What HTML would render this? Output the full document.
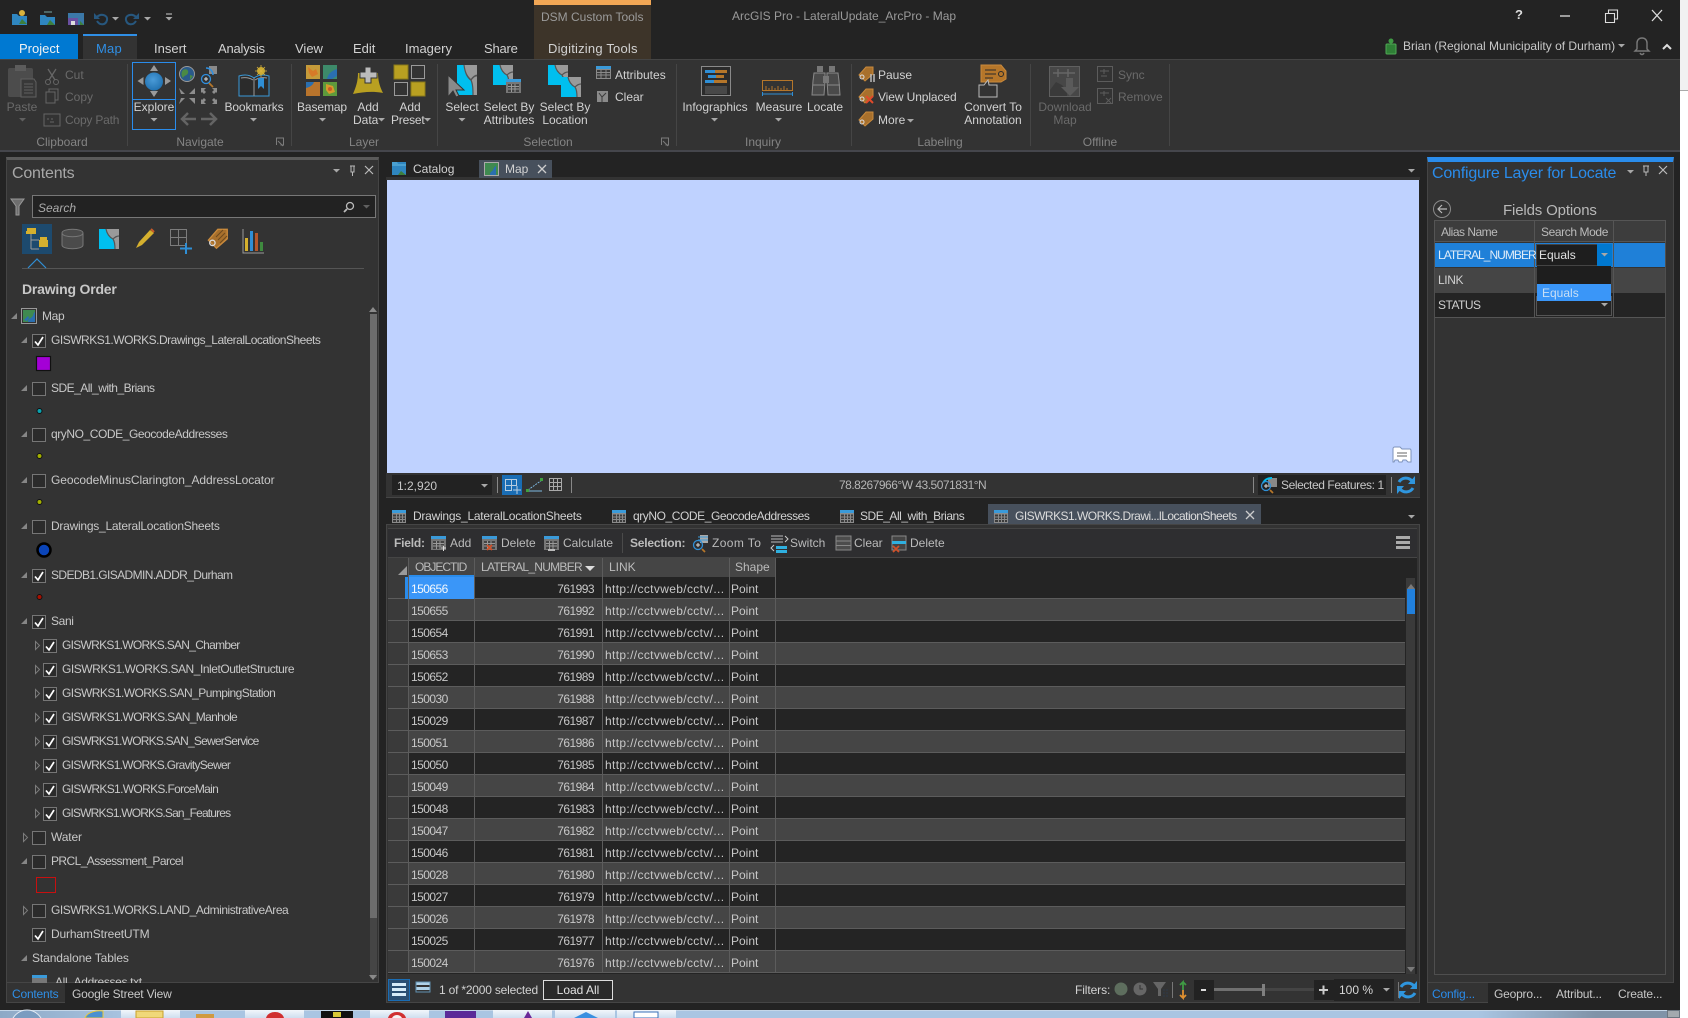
<!DOCTYPE html>
<html><head><meta charset="utf-8"><title>ArcGIS Pro</title>
<style>
html,body{margin:0;padding:0;background:#fff;}
body{position:relative;width:1688px;height:1018px;overflow:hidden;font-family:"Liberation Sans",sans-serif;font-size:12px;color:#d2d2d2;}
.b{position:absolute;}
.t{position:absolute;white-space:nowrap;line-height:16px;}
.c{transform:translateX(-50%);text-align:center;}
.g{color:#6a6a6a;}
.l{color:#848484;}
.n{letter-spacing:-.35px;color:#c8c8c8;}
.r{position:absolute;left:388px;width:1017px;height:22px;box-sizing:border-box;border-bottom:1px solid #5c5c5c;background:#242424;}
.r.e{background:#454545;}
.r i{position:absolute;top:4px;font-style:normal;line-height:16px;white-space:nowrap;color:#c8c8c8;}
.r .h{left:0;top:0;width:20px;height:21px;background:#3a3a3a;}
.r .a{left:23px;letter-spacing:-.55px;}.r .k{left:86px;width:120px;text-align:right;letter-spacing:-.55px;}.r .u{left:217px;letter-spacing:.35px;}.r .s{left:343px;}
svg{position:absolute;left:0;top:0;}
</style></head><body>
<div class="b" style="left:0;top:0;width:1680px;height:1018px;background:#232323"></div>
<div class="b" style="left:1680px;top:0;width:8px;height:90px;background:#f1f1f1;border-bottom:1px solid #aaa"></div>
<div class="b" style="left:534px;top:0;width:117px;height:5px;background:#f2a755"></div>
<div class="b" style="left:534px;top:5px;width:117px;height:54px;background:#3d3429"></div>
<div class="b" style="left:0;top:34px;width:78px;height:25px;background:#0079d2"></div>
<div class="b" style="left:83px;top:34px;width:54px;height:25px;background:#333;border-top:2px solid #2f8fe6;box-sizing:border-box"></div>
<div class="b" style="left:0;top:59px;width:1680px;height:93px;background:#333;border-top:1px solid #444;border-bottom:2px solid #45464c;box-sizing:border-box"></div>
<!-- panels -->
<div class="b" style="left:6px;top:157px;width:373px;height:826px;background:#333;border:1px solid #454545;box-sizing:border-box;border-top:3px solid #5a5a5a"></div>
<div class="b" style="left:6px;top:983px;width:59px;height:20px;background:#333;border-left:1px solid #454545;border-bottom:1px solid #454545;box-sizing:border-box"></div>
<div class="b" style="left:1427px;top:157px;width:247px;height:826px;background:#333;border:1px solid #454545;border-top:5px solid #2a8ceb;box-sizing:border-box"></div>
<div class="b" style="left:1427px;top:983px;width:61px;height:20px;background:#333;border-left:1px solid #454545;border-bottom:1px solid #454545;box-sizing:border-box"></div>
<div class="b" style="left:1434px;top:220px;width:232px;height:755px;border:1px solid #4f4f4f;box-sizing:border-box"></div>
<!-- config table -->
<div class="b" style="left:1434px;top:220px;width:232px;height:22px;background:#3d3d3d;border:1px solid #555;box-sizing:border-box"></div>
<div class="b" style="left:1435px;top:243px;width:230px;height:24px;background:#1f80d8"></div>
<div class="b" style="left:1435px;top:268px;width:230px;height:25px;background:#454545"></div>
<div class="b" style="left:1435px;top:293px;width:230px;height:25px;background:#242424;border-bottom:1px solid #555;box-sizing:border-box"></div>
<div class="b" style="left:1534px;top:220px;width:1px;height:98px;background:#555"></div>
<div class="b" style="left:1613px;top:220px;width:1px;height:98px;background:#555"></div>
<div class="b" style="left:1536px;top:244px;width:76px;height:22px;background:#1e1e1e;border:1px solid #444;box-sizing:border-box"></div>
<div class="b" style="left:1597px;top:244px;width:15px;height:22px;background:#0078d0"></div>
<div class="b" style="left:1536px;top:296px;width:76px;height:20px;border:1px solid #555;box-sizing:border-box"></div>
<div class="b" style="left:1537px;top:266px;width:74px;height:35px;background:#1e1e1e"></div>
<div class="b" style="left:1537px;top:284px;width:74px;height:17px;background:#3a96f8"></div>
<!-- map -->
<div class="b" style="left:386px;top:177px;width:1034px;height:3px;background:#333"></div>
<div class="b" style="left:479px;top:160px;width:73px;height:18px;background:#47505c"></div>
<div class="b" style="left:387px;top:180px;width:1032px;height:293px;background:#bfd2ff"></div>
<div class="b" style="left:386px;top:473px;width:1034px;height:25px;background:#333;border-bottom:1px solid #454545;box-sizing:border-box"></div>
<div class="b" style="left:392px;top:475px;width:100px;height:20px;background:#222"></div>
<div class="b" style="left:502px;top:475px;width:20px;height:20px;background:#1a6db4"></div>
<div class="b" style="left:1258px;top:475px;width:128px;height:20px;background:#222"></div>
<div class="b" style="left:497px;top:477px;width:1px;height:16px;background:#888"></div>
<div class="b" style="left:571px;top:477px;width:1px;height:16px;background:#888"></div>
<div class="b" style="left:1253px;top:477px;width:1px;height:16px;background:#888"></div>
<div class="b" style="left:1391px;top:477px;width:1px;height:16px;background:#888"></div>
<!-- table panel -->
<div class="b" style="left:988px;top:504px;width:273px;height:21px;background:#47505c"></div>
<div class="b" style="left:386px;top:524px;width:1034px;height:479px;background:#333;border:1px solid #454545;box-sizing:border-box"></div>
<div class="b" style="left:388px;top:528px;width:1029px;height:30px;background:#2e2e30;border-top:1px solid #444;border-bottom:1px solid #454545;box-sizing:border-box"></div>
<div class="b" style="left:622px;top:533px;width:1px;height:20px;background:#4a4a4a"></div>
<div class="b" style="left:388px;top:558px;width:1029px;height:416px;background:#242424"></div>
<div class="b" style="left:388px;top:558px;width:20px;height:19px;background:#3a3a3a"></div>
<div class="b" style="left:409px;top:558px;width:65px;height:19px;background:#454545;border-bottom:2px solid #2a8ceb;box-sizing:border-box"></div>
<div class="b" style="left:475px;top:558px;width:127px;height:19px;background:#454545"></div>
<div class="b" style="left:603px;top:558px;width:126px;height:19px;background:#454545"></div>
<div class="b" style="left:730px;top:558px;width:45px;height:19px;background:#454545"></div>
<div class="r"style="top:577px"><i class="h"></i><i class="k">761993</i><i class="u">http://cctvweb/cctv/...</i><i class="s">Point</i></div>
<div class="r e"style="top:599px"><i class="h"></i><i class="a">150655</i><i class="k">761992</i><i class="u">http://cctvweb/cctv/...</i><i class="s">Point</i></div>
<div class="r"style="top:621px"><i class="h"></i><i class="a">150654</i><i class="k">761991</i><i class="u">http://cctvweb/cctv/...</i><i class="s">Point</i></div>
<div class="r e"style="top:643px"><i class="h"></i><i class="a">150653</i><i class="k">761990</i><i class="u">http://cctvweb/cctv/...</i><i class="s">Point</i></div>
<div class="r"style="top:665px"><i class="h"></i><i class="a">150652</i><i class="k">761989</i><i class="u">http://cctvweb/cctv/...</i><i class="s">Point</i></div>
<div class="r e"style="top:687px"><i class="h"></i><i class="a">150030</i><i class="k">761988</i><i class="u">http://cctvweb/cctv/...</i><i class="s">Point</i></div>
<div class="r"style="top:709px"><i class="h"></i><i class="a">150029</i><i class="k">761987</i><i class="u">http://cctvweb/cctv/...</i><i class="s">Point</i></div>
<div class="r e"style="top:731px"><i class="h"></i><i class="a">150051</i><i class="k">761986</i><i class="u">http://cctvweb/cctv/...</i><i class="s">Point</i></div>
<div class="r"style="top:753px"><i class="h"></i><i class="a">150050</i><i class="k">761985</i><i class="u">http://cctvweb/cctv/...</i><i class="s">Point</i></div>
<div class="r e"style="top:775px"><i class="h"></i><i class="a">150049</i><i class="k">761984</i><i class="u">http://cctvweb/cctv/...</i><i class="s">Point</i></div>
<div class="r"style="top:797px"><i class="h"></i><i class="a">150048</i><i class="k">761983</i><i class="u">http://cctvweb/cctv/...</i><i class="s">Point</i></div>
<div class="r e"style="top:819px"><i class="h"></i><i class="a">150047</i><i class="k">761982</i><i class="u">http://cctvweb/cctv/...</i><i class="s">Point</i></div>
<div class="r"style="top:841px"><i class="h"></i><i class="a">150046</i><i class="k">761981</i><i class="u">http://cctvweb/cctv/...</i><i class="s">Point</i></div>
<div class="r e"style="top:863px"><i class="h"></i><i class="a">150028</i><i class="k">761980</i><i class="u">http://cctvweb/cctv/...</i><i class="s">Point</i></div>
<div class="r"style="top:885px"><i class="h"></i><i class="a">150027</i><i class="k">761979</i><i class="u">http://cctvweb/cctv/...</i><i class="s">Point</i></div>
<div class="r e"style="top:907px"><i class="h"></i><i class="a">150026</i><i class="k">761978</i><i class="u">http://cctvweb/cctv/...</i><i class="s">Point</i></div>
<div class="r"style="top:929px"><i class="h"></i><i class="a">150025</i><i class="k">761977</i><i class="u">http://cctvweb/cctv/...</i><i class="s">Point</i></div>
<div class="r e"style="top:951px"><i class="h"></i><i class="a">150024</i><i class="k">761976</i><i class="u">http://cctvweb/cctv/...</i><i class="s">Point</i></div>
<div class="b" style="left:409px;top:577px;width:65px;height:22px;background:#3a96f8"></div>
<div class="b" style="left:405px;top:577px;width:4px;height:22px;background:#2a8ceb"></div>
<span class="t" style="left:411px;top:581px;color:#f4f8fc;letter-spacing:-.55px">150656</span>
<div class="b" style="left:408px;top:558px;width:1px;height:415px;background:#5c5c5c"></div>
<div class="b" style="left:474px;top:558px;width:1px;height:415px;background:#5c5c5c"></div>
<div class="b" style="left:602px;top:558px;width:1px;height:415px;background:#5c5c5c"></div>
<div class="b" style="left:729px;top:558px;width:1px;height:415px;background:#5c5c5c"></div>
<div class="b" style="left:775px;top:558px;width:1px;height:415px;background:#5c5c5c"></div>
<div class="b" style="left:1406px;top:578px;width:9px;height:396px;background:#3a3a3a"></div>
<div class="b" style="left:1407px;top:589px;width:8px;height:25px;background:#2180dc"></div>
<!-- table footer -->
<div class="b" style="left:388px;top:979px;width:22px;height:22px;background:#2a4f72;border:1px solid #1a6db4;box-sizing:border-box"></div>
<div class="b" style="left:543px;top:980px;width:70px;height:20px;border:1px solid #ddd;box-sizing:border-box;background:#2a2a2a"></div>
<div class="b" style="left:1194px;top:980px;width:20px;height:20px;background:#222"></div>
<div class="b" style="left:1214px;top:988px;width:100px;height:3px;background:#444"></div>
<div class="b" style="left:1214px;top:988px;width:49px;height:3px;background:#707070"></div>
<div class="b" style="left:1262px;top:984px;width:3px;height:12px;background:#808080"></div>
<div class="b" style="left:1314px;top:980px;width:20px;height:20px;background:#222"></div>
<div class="b" style="left:1334px;top:979px;width:60px;height:22px;background:#222"></div>
<div class="b" style="left:1172px;top:982px;width:1px;height:16px;background:#777"></div>
<div class="b" style="left:1398px;top:982px;width:1px;height:16px;background:#777"></div>
<!-- contents scrollbar -->
<div class="b" style="left:370px;top:314px;width:7px;height:664px;background:#454545"></div>
<div class="b" style="left:370px;top:314px;width:7px;height:604px;background:#6c6c6c"></div>
<!-- contents inputs -->
<div class="b" style="left:32px;top:195px;width:344px;height:23px;background:#222;border:1px solid #777;box-sizing:border-box"></div>
<div class="b" style="left:22px;top:224px;width:30px;height:30px;background:#1d4a6e"></div>
<div class="b" style="left:22px;top:268px;width:342px;height:1px;background:#555"></div>
<!-- taskbar -->
<div class="b" style="left:0;top:1010px;width:1680px;height:8px;background:linear-gradient(90deg,#8ea9c6 0,#a9c5e2 8%,#a9c5e2 68%,#a9c5e2 88%,#8093a8 95%,#8093a8 100%);border-top:1px solid #c4d6e8;box-sizing:border-box"></div>
<div class="b" style="left:121px;top:1010px;width:59px;height:8px;background:linear-gradient(#f2f6fb,#cfdeef)"></div>
<div class="b" style="left:245px;top:1010px;width:59px;height:8px;background:linear-gradient(#f2f6fb,#cfdeef)"></div>
<div class="b" style="left:370px;top:1010px;width:59px;height:8px;background:linear-gradient(#f2f6fb,#cfdeef)"></div>
<div class="b" style="left:493px;top:1010px;width:59px;height:8px;background:linear-gradient(#f2f6fb,#cfdeef)"></div>
<div class="b" style="left:555px;top:1010px;width:60px;height:8px;background:linear-gradient(#f2f6fb,#cfdeef)"></div>
<div class="b" style="left:617px;top:1010px;width:59px;height:8px;background:linear-gradient(#f2f6fb,#cfdeef)"></div>
<div class="b" style="left:1667px;top:1010px;width:13px;height:8px;background:#a3a9ae;border:1px solid #6c7680;box-sizing:border-box"></div>

<svg width="1688" height="1018" viewBox="0 0 1688 1018" fill="none">
<defs>
<g id="cb"><rect x=".5" y=".5" width="13" height="13" fill="#2b2b2b" stroke="#767676"/></g>
<g id="ck"><rect x=".5" y=".5" width="13" height="13" fill="#2b2b2b" stroke="#767676"/><path d="M3 7.5 6 11 11 3" stroke="#fff" stroke-width="1.7"/></g>
<polygon id="te" points="0,6 6,6 6,0" fill="#868686"/>
<polygon id="tc" points=".5,.5 4.5,4.5 .5,8.5" fill="none" stroke="#7c7c7c"/>
<g id="tb"><rect width="14" height="13" fill="#8a8a8a"/><rect width="14" height="3" fill="#3a9ad9"/><path d="M1 4.5h12v7.5H1z" fill="#3b3b3b"/><path d="M1 7h12M1 9.500h12M4.500 4v8M7.500 4v8M10.500 4v8" stroke="#8a8a8a"/></g>
<g id="tag"><path d="M1 9 8 1h7v7L7 15z" fill="#a8702c" stroke="#c98a3c"/><circle cx="4" cy="11" r="2" stroke="#ddd"/></g>
<polygon id="dn" points="0,0 7,0 3.500,3.500" fill="#a8a8a8"/>
<polygon id="dg" points="0,0 7,0 3.500,3.500" fill="#606060"/>
<g id="mp"><rect width="20" height="20" fill="#9a9a9a"/><path d="M0 0h7c1 5 3 8 7 10 2 3 2 7 2 10H0z" fill="#00bfef"/><path d="M7 0c1 5 3 8 7 10 2 3 2 7 2 10M14 10c2-2 4-3 6-3" stroke="#555" stroke-width="1.200"/></g>
<g id="ti"><rect width="15" height="14" fill="#777"/><rect width="15" height="3" fill="#3a9ad9"/><path d="M2 5h11v8H2z" fill="#444"/><path d="M2 7.500h11M2 10h11M5.500 5v8M9 5v8" stroke="#999"/></g>
</defs>

<!-- quick access -->
<path d="M12 14h5l2 2h8v9H12z" fill="#2f86c0"/><path d="M19 24l3-5 5 5z" fill="#3d7f3d"/><circle cx="22" cy="13" r="3" fill="#d9b23c"/>
<path d="M40 15h5l2 2h8v8H40z" fill="#2f86c0"/><path d="M47 25l3-5 5 5z" fill="#3d7f3d"/><path d="M44 12h8" stroke="#7aa"/>
<path d="M68 13h16v12H68z" fill="#3b78a8"/><path d="M68 18h10v7H68z" fill="#6a4fa0"/><path d="M71 21h4v4h-4z" fill="#ddd"/><path d="M80 21l4 4h-4z" fill="#3d7f3d"/>
<path d="M97 21c3 5 9 4 10-1s-6-7-10-3" stroke="#27577e" stroke-width="2"/><path d="M94 13v6h6z" fill="#27577e"/>
<path d="M136 21c-3 5-9 4-10-1s6-7 10-3" stroke="#27577e" stroke-width="2"/><path d="M139 13v6h-6z" fill="#27577e"/>
<use href="#dn" x="112" y="17"/><use href="#dn" x="144" y="17"/>
<path d="M166 14h6" stroke="#ccc"/><use href="#dn" x="165.500" y="17"/>

<!-- ribbon separators -->
<path d="M127.500 64v82M291.500 64v82M437.500 64v82M676.500 64v82M851.500 64v82M1030.500 64v82M1169.500 64v82" stroke="#454545"/>
<!-- paste -->
<rect x="8" y="68" width="25" height="29" rx="2" fill="#4c4c4c"/><rect x="15" y="65" width="11" height="6" fill="#5c5c5c"/><path d="M21 79h13l2 3v15H21z" fill="#383838" stroke="#606060"/><path d="M24 84h9M24 87h9M24 90h9M24 93h9" stroke="#606060"/>
<use href="#dg" x="19" y="118"/>
<path d="M48 69l7 11M56 69l-7 11" stroke="#666" stroke-width="1.300"/><circle cx="48" cy="82" r="2.500" stroke="#666"/><circle cx="56" cy="82" r="2.500" stroke="#666"/>
<rect x="49" y="89" width="9" height="11" fill="#333" stroke="#666"/><rect x="46" y="92" width="9" height="11" fill="#333" stroke="#666"/>
<rect x="44" y="114" width="16" height="12" stroke="#666"/><path d="M48 118v2M52 118v2M50 122h4" stroke="#666"/>
<!-- explore -->
<rect x="132.500" y="62.500" width="43" height="67" stroke="#2a8ceb"/><path d="M132 99.500h44" stroke="#2a8ceb"/>
<defs><radialGradient id="gb" cx=".45" cy=".4" r=".7"><stop offset="0" stop-color="#4a9bd8"/><stop offset="1" stop-color="#1c6cab"/></radialGradient></defs>
<circle cx="154" cy="81.500" r="9" fill="url(#gb)"/>
<path d="M154 65l4 6h-8zM154 97l4-6h-8zM137.500 81l6-4v8zM171 81l-6-4v8z" fill="#9a9a9a"/>
<use href="#dn" x="150.500" y="118"/>
<!-- nav -->
<circle cx="187" cy="74" r="7.500" fill="#2a5a8a" stroke="#9a9a9a"/><path d="M183 70c3-2 6 0 5 3s-4 2-5 5c-2-2-2-6 0-8zM190 75l3 1-3 4z" fill="#4b8a45"/>
<rect x="209" y="66" width="8" height="8" fill="#8a8a8a"/><path d="M206 68c4 0 7 3 7 7" stroke="#2e8fe0" stroke-width="1.500"/><circle cx="206" cy="79" r="4.500" stroke="#2e8fe0" stroke-width="1.300"/><path d="M204 79h4M206 77v4" stroke="#ddd"/><path d="M209 83l4 4" stroke="#b5762a" stroke-width="1.800"/>
<path d="M179 88l6 6h-4zM195 88v6h-6zM179 104l6-6h-4zM195 104v-6h-6z" fill="#8d8d8d"/>
<path d="M201 88h5l-2 2 2 2-2 2-2-2-1 1zM217 88h-5l2 2-2 2 2 2 2-2 1 1zM201 104h5l-2-2 2-2-2-2-2 2-1-1zM217 104h-5l2-2-2-2 2-2 2 2 1-1z" fill="#8d8d8d"/>
<path d="M196 119h-14M188 113l-6 6 6 6M201 119h14M210 113l6 6-6 6" stroke="#646464" stroke-width="2.500"/>
<!-- bookmarks -->
<path d="M239 76c6-2 11-1 15 2 4-3 9-4 15-2v20h-30z" fill="#2b2b2b" stroke="#3a9ad9"/><path d="M254 78v18M241 78c5-1 9 0 12 2M267 78c-5-1-9 0-12 2" stroke="#9a9a9a"/>
<path d="M258 78h6v11l-3-3-3 3z" fill="#2f8fd6"/><circle cx="261" cy="71" r="4" fill="#c5a72d"/><path d="M261 65v12M255 71h12M257 67l8 8M265 67l-8 8" stroke="#d9b23c" stroke-width=".8"/>
<use href="#dn" x="250" y="118"/>
<!-- basemap -->
<rect x="306" y="65" width="14" height="14" fill="#c59b3a"/><path d="M308 67l5 4 3-2 2 5-6 3-3-4z" fill="#d67a28"/>
<rect x="323" y="65" width="14" height="14" fill="#3d8a6a"/><path d="M327 79c1-5 4-8 10-10v7l-5 3z" fill="#2a6fb0"/>
<rect x="306" y="82" width="14" height="14" fill="#b8742c"/><path d="M306 82h8c-1 3-4 5-8 6z" fill="#2a6fb0"/>
<rect x="323" y="82" width="14" height="14" fill="#5e9a3c"/><path d="M326 84l7 2 2 6-6 2-3-4z" fill="#d69a2c"/><circle cx="330" cy="89" r="2" fill="#c85a28"/>
<use href="#dn" x="319" y="118"/>
<!-- add data -->
<path d="M358 73h20c0 8 2 14 5 20-10-2-20-1-30 1 3-7 5-13 5-21z" fill="#b9a021"/><path d="M365 67h6v5h6v6h-6v5h-6v-5h-5v-6h5z" fill="#bbb" stroke="#333"/>
<use href="#dn" x="378" y="118"/>
<!-- add preset -->
<rect x="394" y="65" width="14" height="14" fill="#b9a021" stroke="#8a7a1a"/><rect x="411.500" y="65.500" width="13" height="13" stroke="#9a9a9a"/><rect x="394.500" y="82.500" width="13" height="13" stroke="#9a9a9a"/><rect x="411" y="82" width="14" height="14" fill="#b9a021" stroke="#8a7a1a"/>
<use href="#dn" x="424" y="118"/>
<!-- select -->
<g transform="translate(457 65) scale(1 1.500)"><use href="#mp"/></g>
<path d="M448 75v22l5-6 3 6 3-1-3-6 8 0z" fill="#8a8a8a" stroke="#333"/>
<use href="#dn" x="458.500" y="118"/>
<use href="#mp" x="493" y="65"/><use href="#ti" x="506" y="79"/>
<use href="#mp" x="548" y="65"/><use href="#mp" x="561" y="77"/>
<rect x="596" y="66" width="15" height="13" fill="#8a8a8a"/><rect x="596" y="66" width="15" height="3" fill="#3a9ad9"/><path d="M597 70h13v8h-13z" fill="#3b3b3b"/><path d="M597 72.500h13M597 75h13M601 70v8M606 70v8" stroke="#8a8a8a"/>
<rect x="597" y="91" width="11" height="11" fill="#8a8a8a"/><path d="M599 93l3 4 4-4M602 97v5" stroke="#3a3a3a"/>
<!-- infographics -->
<rect x="701.500" y="66.500" width="29" height="29" fill="#2b2b2b" stroke="#8a8a8a"/><path d="M705 70h10v3h-10zM708 75h8v3h-8zM705 80h9v3h-9z" fill="#2f8fd6"/><path d="M715 70h12v3h-12zM716 75h8v3h-8zM714 80h13v3h-13z" fill="#b5762a"/><path d="M705 87h22M705 89h22M705 91h22M705 93h22" stroke="#666"/>
<use href="#dn" x="711" y="118"/>
<!-- measure -->
<rect x="762.500" y="80.500" width="30" height="10" stroke="#b5762a"/><path d="M766 91v-5M769 91v-3M772 91v-5M775 91v-3M778 91v-5M781 91v-3M784 91v-5M787 91v-3" stroke="#b5762a"/><path d="M762 94h31M762.500 92v4M792.500 92v4" stroke="#2f8fd6"/>
<use href="#dn" x="775" y="118"/>
<!-- locate -->
<path d="M817 66h6v6h-6zM829 66h6v6h-6z" fill="#777"/><path d="M814 73h11v8l-1 14h-12l1-14zM827 73h11l1 8 1 14h-12l-1-14z" fill="#4a4a4a" stroke="#8a8a8a"/><rect x="823" y="76" width="6" height="7" fill="#777"/><path d="M813 85h11M828 85h12" stroke="#8a8a8a"/>
<!-- labeling -->
<use href="#tag" x="858" y="66"/><path d="M871 74v8M874 74v8" stroke="#bbb" stroke-width="1.500"/>
<use href="#tag" x="858" y="88"/><path d="M866 96l7 7M873 96l-7 7" stroke="#e04a2a" stroke-width="2"/>
<use href="#tag" x="858" y="111"/><use href="#dn" x="907" y="119"/>
<path d="M981 65h20l5 6v8l-5 3h-20z" fill="#b5762a" stroke="#c98a3c"/><path d="M985 70h11M985 74h11M985 78h8" stroke="#2b2b2b"/><circle cx="1001" cy="74" r="2.500" stroke="#2b2b2b"/>
<path d="M979 85h5l4-5 1 5h8v12h-18z" fill="#333" stroke="#bbb"/>
<!-- offline -->
<rect x="1049.500" y="66.500" width="30" height="30" fill="#474747" stroke="#606060"/><path d="M1053 73h22M1058 69v8M1068 69v8" stroke="#666" stroke-width="1.500"/><path d="M1050 90l6-8 6 3 5 6 0 5h-17z" fill="#3a3a3a"/><path d="M1066 78h7v9h6l-9 9-9-9h5z" fill="#5a5a5a"/>
<rect x="1097.500" y="66.500" width="15" height="15" stroke="#5c5c5c"/><path d="M1100 71h9M1104 69v5M1101 76h6" stroke="#5c5c5c"/>
<rect x="1097.500" y="88.500" width="15" height="15" stroke="#5c5c5c"/><path d="M1100 93h9M1104 91v5M1106 98l5 5M1111 98l-5 5" stroke="#5c5c5c"/>
<path d="M276.500 145v-7h7v7h-3M278 141l5 5" stroke="#7c7c7c"/><path d="M661.500 145v-7h7v7h-3M663 141l5 5" stroke="#7c7c7c"/>

<!-- window controls -->
<path d="M1560 16h10" stroke="#ddd" stroke-width="1.300"/>
<path d="M1605.500 13.500h9v9h-9zM1608.500 13v-3h9v9h-3" stroke="#ddd" stroke-width="1.100"/>
<path d="M1652 10l10 11M1662 10l-10 11" stroke="#ddd" stroke-width="1.300"/>
<!-- user -->
<circle cx="1391" cy="41" r="2.500" fill="#3f9a44"/><rect x="1386" y="44" width="10" height="10" rx="1" fill="#2f7f36" stroke="#4fa854"/>
<use href="#dn" x="1618" y="44"/>
<path d="M1642 38c-3 0-5 2-5 5v6l-2 2h14l-2-2v-6c0-3-2-5-5-5zM1640 53c1 2 3 2 4 0" stroke="#7a7a7a" stroke-width="1.400"/>
<path d="M1663 49l4-4 4 4" stroke="#ddd" stroke-width="2"/>

<!-- contents panel chrome -->
<use href="#dn" x="333" y="169"/>
<path d="M350 166h5M351 166v6h3v-6M352.500 172v4" stroke="#bbb"/>
<path d="M365 166l8 8M373 166l-8 8" stroke="#bbb" stroke-width="1.200"/>
<path d="M11 199h13l-5 7v9h-3v-9z" fill="#6e6e6e" stroke="#999"/>
<circle cx="350" cy="206" r="3.500" stroke="#bbb" stroke-width="1.300"/><path d="M347 209l-3 3" stroke="#bbb" stroke-width="1.800"/>
<use href="#dg" x="363" y="205"/>
<!-- category icons -->
<path d="M27 228h9v3H27zM26 231h10v3H26z" fill="#d5b02e"/><path d="M31 234v15M31 240h8M31 249h8" stroke="#999"/><path d="M40 237h7v3h-7zM39 240h9v5h-9zM39 245h9v2h-9z" fill="#d5b02e"/>
<path d="M62 233c0-5 21-5 21 0v12c0 5-21 5-21 0z" fill="#4b4b4b" stroke="#777"/><path d="M62 233c0 5 21 5 21 0" stroke="#777"/>
<use href="#mp" x="99" y="229"/>
<path d="M136 248l3-6 11-12 4 3-12 12z" fill="#d5b02e"/><path d="M151 229l3 3" stroke="#c85a28" stroke-width="2"/>
<path d="M170.500 229.500h16v16h-16zM178.500 229.500v16M170.500 237.500h16" stroke="#7c7c7c"/><path d="M186 243v11M180 248.500h12" stroke="#2f8fd6" stroke-width="2"/>
<g transform="translate(207 228) scale(1.350)"><use href="#tag"/></g><path d="M216 236l7-7M218 239l7-7M220 242l7-7" stroke="#6e4a1e" transform="translate(0 1)"/>
<path d="M243 229v24h21" stroke="#9a9a9a"/><rect x="245" y="238" width="3" height="13" fill="#d5b02e"/><rect x="250" y="231" width="3" height="20" fill="#2f8fd6"/><rect x="255" y="233" width="3" height="18" fill="#b5562a"/><rect x="260" y="242" width="3" height="9" fill="#3f8a3f"/>
<path d="M28 268l9-9 9 9" stroke="#2f8fd6" stroke-width="1.200"/>
<!-- tree -->
<use href="#te" x="11" y="313"/><rect x="21.500" y="308.500" width="15" height="15" fill="#333" stroke="#999"/><path d="M23 310h12v12H23z" fill="#3f8a50"/><path d="M28 322c0-4 2-3 4-5s1-4 3-5v10z" fill="#2a6fb0"/><path d="M24 320l4-4 1 2-2 3z" fill="#2a6fb0"/>
<use href="#te" x="21" y="337"/><use href="#ck" x="32" y="334"/>
<rect x="36.500" y="356.500" width="14" height="14" fill="#a400d6" stroke="#111" stroke-width="1.200"/>
<use href="#te" x="21" y="385"/><use href="#cb" x="32" y="382"/>
<circle cx="39.500" cy="411" r="2.500" fill="#0aa3b0" stroke="#111"/>
<use href="#te" x="21" y="431"/><use href="#cb" x="32" y="428"/>
<circle cx="39.500" cy="456" r="2.500" fill="#a3b000" stroke="#111"/>
<use href="#te" x="21" y="477"/><use href="#cb" x="32" y="474"/>
<circle cx="39.500" cy="502" r="2.500" fill="#a3b000" stroke="#111"/>
<use href="#te" x="21" y="523"/><use href="#cb" x="32" y="520"/>
<circle cx="44" cy="550" r="6.500" fill="#0a44b8" stroke="#000" stroke-width="2.500"/>
<use href="#te" x="21" y="572"/><use href="#ck" x="32" y="569"/>
<circle cx="39.500" cy="597" r="2.500" fill="#a81000" stroke="#111"/>
<use href="#te" x="21" y="618"/><use href="#ck" x="32" y="615"/>
<use href="#tc" x="35" y="641"/><use href="#ck" x="43" y="639"/>
<use href="#tc" x="35" y="665"/><use href="#ck" x="43" y="663"/>
<use href="#tc" x="35" y="689"/><use href="#ck" x="43" y="687"/>
<use href="#tc" x="35" y="713"/><use href="#ck" x="43" y="711"/>
<use href="#tc" x="35" y="737"/><use href="#ck" x="43" y="735"/>
<use href="#tc" x="35" y="761"/><use href="#ck" x="43" y="759"/>
<use href="#tc" x="35" y="785"/><use href="#ck" x="43" y="783"/>
<use href="#tc" x="35" y="809"/><use href="#ck" x="43" y="807"/>
<use href="#tc" x="23" y="833"/><use href="#cb" x="32" y="831"/>
<use href="#te" x="21" y="858"/><use href="#cb" x="32" y="855"/>
<rect x="36.500" y="877.500" width="19" height="15" stroke="#c81010"/>
<use href="#tc" x="23" y="906"/><use href="#cb" x="32" y="904"/>
<use href="#ck" x="32" y="928"/>
<use href="#te" x="21" y="955"/>
<rect x="32" y="975" width="15" height="8" fill="#777"/><rect x="32" y="975" width="15" height="3" fill="#3a9ad9"/>
<path d="M369 312l4-5 4 5z" fill="#8a8a8a"/><path d="M369 975l4 5 4-5z" fill="#8a8a8a"/>

<!-- map tabs -->
<rect x="392" y="162" width="14" height="13" fill="#2f86c0"/><path d="M392 162h5l1 2h8v2h-14z" fill="#4aa0d0"/><path d="M398 175l3-4 5 4z" fill="#3d7f3d"/>
<rect x="484.500" y="162.500" width="14" height="13" fill="#3f8a50" stroke="#aaa"/><path d="M490 175c0-4 2-3 3-5s1-3 3-4v9z" fill="#2a6fb0"/>
<path d="M538 165l8 8M546 165l-8 8" stroke="#ccc" stroke-width="1.300"/>
<use href="#dn" x="1408" y="169"/>
<!-- map folder -->
<path d="M1393 449c0-2 1-2 2-2h5l2 2h8c1 0 1 1 1 2v11h-3l-2-2h-3l-1 2h-3l-1-2h-3l-1 2h-1z" fill="#fff" stroke="#7e93bb"/><path d="M1397 453h10M1397 456h10" stroke="#666"/>
<!-- status -->
<use href="#dn" x="481" y="484"/>
<path d="M505.500 479.500h6v6h-6zM511.500 479.500h5v6h-5zM505.500 485.500h6v5h-6z" stroke="#b8cde0"/><path d="M517 486v8M513 490h8" stroke="#b8cde0"/>
<path d="M528 490l14-10" stroke="#7db8e0" stroke-dasharray="2 1"/><path d="M527 491h15" stroke="#7db8e0"/><rect x="526" y="489" width="3" height="3" fill="#3fa03f"/><rect x="540" y="478" width="3" height="3" fill="#3fa03f"/>
<path d="M549.500 478.500h12v12h-12zM553.500 478v12M557.500 478v12M549 482.500h12M549 486.500h12" stroke="#aaa"/>
<rect x="1268" y="478" width="9" height="9" fill="#888"/><path d="M1263 483c2-4 6-5 9-5" stroke="#00bfef" stroke-width="2"/><circle cx="1266" cy="486" r="4.500" stroke="#2f8fd6" stroke-width="1.300"/><path d="M1264 486h4M1266 484v4" stroke="#ddd"/><path d="M1270 490l3 3" stroke="#b5762a" stroke-width="1.800"/>
<path d="M1399 482A8 8 0 0 1 1412 481M1413 488A8 8 0 0 1 1400 489" stroke="#2f96de" stroke-width="3"/><path d="M1415 476v8h-7zM1397 494v-8h7z" fill="#2f96de"/>
<!-- table tabs -->
<use href="#tb" x="392" y="510"/><use href="#tb" x="612" y="510"/><use href="#tb" x="840" y="510"/><use href="#tb" x="994" y="510"/>
<path d="M1246 511l8 8M1254 511l-8 8" stroke="#ccc" stroke-width="1.300"/>
<use href="#dn" x="1408" y="515"/>
<!-- table toolbar -->
<use href="#ti" x="431" y="536"/><path d="M441 548h5M443.500 546v5" stroke="#ddd"/>
<use href="#ti" x="482" y="536"/><path d="M487 545l5 5M492 545l-5 5" stroke="#d05028" stroke-width="1.800"/>
<use href="#ti" x="544" y="536"/><path d="M548 550h7" stroke="#bbb" stroke-width="2"/>
<rect x="700" y="535" width="8" height="8" fill="#aaa"/><path d="M698 537h10M698 540h10" stroke="#3a9ad9"/><circle cx="698" cy="545" r="4.500" stroke="#2f8fd6" stroke-width="1.300"/><path d="M696 545h4M698 543v4" stroke="#ddd"/><path d="M702 549l3 3" stroke="#b5762a" stroke-width="1.800"/>
<path d="M771 536h12M771 539h12M771 542h12" stroke="#bbb"/><path d="M776 546h11v3h-11zM776 550h11v3h-11z" fill="#2fb0e0"/><path d="M785 536l3 3-3 3M774 545l-3 3 3 3" stroke="#ccc"/>
<path d="M836 536h15v14h-15z" fill="#4c4c4c" stroke="#888"/><path d="M836 541h15M836 545.500h15" stroke="#888"/>
<path d="M892 536h14v14h-14z" fill="#444" stroke="#888"/><path d="M892 541h14v3h-14z" fill="#2fb0e0"/><path d="M893 546l6 6M899 546l-6 6" stroke="#d05028" stroke-width="1.800"/>
<path d="M1396 537.500h14M1396 542.500h14M1396 547.500h14" stroke="#aaa" stroke-width="3"/>
<!-- table header -->
<polygon points="398,575 407,575 407,566" fill="#9a9a9a"/>
<polygon points="585,566 595,566 590,571" fill="#ddd"/>
<path d="M1407 589l4-5 4 5z" fill="#7a7a7a"/><path d="M1407 967l4 5 4-5z" fill="#7a7a7a"/>
<!-- table footer icons -->
<path d="M392 983h14v3h-14zM392 988h14v3h-14zM392 993h14v3h-14z" fill="#d6ecf8"/>
<path d="M416 982h14v3h-14zM416 987h14v3h-14z" fill="#b0d2e8"/><rect x="416" y="982" width="14" height="10" stroke="#6090b0"/>
<circle cx="1121" cy="989" r="6.500" fill="#5e6e5e"/><circle cx="1140" cy="989" r="6.500" fill="#666"/><path d="M1140 985v4h3" stroke="#333"/>
<path d="M1153 982h13l-5 7v7h-3v-7z" fill="#666"/><path d="M1163 990h6M1163 993h6M1163 996h6" stroke="#2c3a4a" stroke-dasharray="2 1"/>
<path d="M1183 990v-8l-3 3M1183 982l3 3" stroke="#3f9a44" stroke-width="1.800"/><path d="M1183 990v8l-3-3M1183 998l3-3" stroke="#e09030" stroke-width="1.800"/>
<path d="M1201 990h5" stroke="#ddd" stroke-width="2"/><path d="M1319 990h9M1323.500 985.500v9" stroke="#ccc" stroke-width="2"/>
<use href="#dn" x="1383" y="988"/>
<path d="M1401 987A8 8 0 0 1 1414 986M1415 993A8 8 0 0 1 1402 994" stroke="#2f96de" stroke-width="3"/><path d="M1417 981v8h-7zM1399 999v-8h7z" fill="#2f96de"/>
<!-- right panel chrome -->
<use href="#dn" x="1627" y="170"/>
<path d="M1643 166h6M1644 166v6h4v-6M1646 172v4" stroke="#bbb"/>
<path d="M1659 166l8 8M1667 166l-8 8" stroke="#bbb" stroke-width="1.200"/>
<circle cx="1442" cy="209" r="8.500" stroke="#8a8a8a"/><path d="M1447 209h-9M1442 205l-4 4 4 4" stroke="#bbb" stroke-width="1.200"/>
<use href="#dn" x="1601" y="253"/>
<use href="#dn" x="1601" y="303"/>
<!-- taskbar icons -->
<circle cx="27" cy="1026" r="16" fill="#7a9cc0" stroke="#e4ecf5"/>
<path d="M85 1018c2-6 12-8 18-7v7z" fill="#4a90d0" stroke="#e8c83a"/>
<rect x="136" y="1011" width="27" height="7" fill="#f0d878" stroke="#c8a02c"/>
<rect x="196" y="1014" width="18" height="4" fill="#d09a40"/>
<path d="M266 1018c1-4 5-6 9-6s8 2 9 6z" fill="#d03030"/>
<rect x="321" y="1011" width="32" height="7" fill="#111"/><path d="M333 1012h8v5h-8z" fill="#d8c838"/>
<path d="M388 1018c1-4 5-6 9-6s8 2 9 6z" fill="#d03030"/><path d="M392 1018c1-2 3-3 5-3s4 1 5 3z" fill="#f4f4f4"/>
<rect x="445" y="1011" width="31" height="7" fill="#5a2a98"/>
<path d="M524 1018l4-7 4 7z" fill="#6a2a98"/>
<path d="M574 1018l12-6 12 6z" fill="#3a90e0"/>
<rect x="634" y="1012" width="24" height="6" fill="#fff" stroke="#3a70b8"/>
</svg>

<!-- text -->
<span class="t" style="left:19px;top:41px;font-size:13px;color:#f2f2f2">Project</span>
<span class="t" style="left:96px;top:41px;font-size:13px;color:#2f8fe6;letter-spacing:.2px">Map</span>
<span class="t" style="left:154px;top:41px;font-size:13px">Insert</span>
<span class="t" style="left:218px;top:41px;font-size:13px;letter-spacing:-.2px">Analysis</span>
<span class="t" style="left:295px;top:41px;font-size:13px">View</span>
<span class="t" style="left:353px;top:41px;font-size:13px">Edit</span>
<span class="t" style="left:405px;top:41px;font-size:13px">Imagery</span>
<span class="t" style="left:484px;top:41px;font-size:13px;letter-spacing:-.2px">Share</span>
<span class="t" style="left:548px;top:41px;font-size:13px;letter-spacing:.2px">Digitizing Tools</span>
<span class="t" style="left:541px;top:9px;color:#9b9b9b">DSM Custom Tools</span>
<span class="t" style="left:732px;top:8px;color:#9a9a9a">ArcGIS Pro - LateralUpdate_ArcPro - Map</span>
<span class="t" style="left:1515px;top:7px;font-size:13px;font-weight:bold;color:#ddd">?</span>
<span class="t" style="left:1403px;top:38px;color:#c8c8c8">Brian (Regional Municipality of Durham)</span>

<span class="t c g" style="left:22px;top:99px">Paste</span>
<span class="t g" style="left:65px;top:67px">Cut</span>
<span class="t g" style="left:65px;top:89px">Copy</span>
<span class="t g" style="left:65px;top:112px;letter-spacing:-.2px">Copy Path</span>
<span class="t c" style="left:154px;top:99px">Explore</span>
<span class="t c" style="left:254px;top:99px;letter-spacing:-.1px">Bookmarks</span>
<span class="t c" style="left:322px;top:99px;letter-spacing:-.1px">Basemap</span>
<span class="t c" style="left:368px;top:99px">Add</span>
<span class="t" style="left:353px;top:112px">Data</span>
<span class="t c" style="left:410px;top:99px">Add</span>
<span class="t" style="left:391px;top:112px;letter-spacing:-.2px">Preset</span>
<span class="t c" style="left:462px;top:99px">Select</span>
<span class="t c" style="left:509px;top:99px">Select By</span>
<span class="t c" style="left:509px;top:112px">Attributes</span>
<span class="t c" style="left:565px;top:99px">Select By</span>
<span class="t c" style="left:565px;top:112px">Location</span>
<span class="t" style="left:615px;top:67px">Attributes</span>
<span class="t" style="left:615px;top:89px">Clear</span>
<span class="t c" style="left:715px;top:99px">Infographics</span>
<span class="t c" style="left:779px;top:99px">Measure</span>
<span class="t c" style="left:825px;top:99px">Locate</span>
<span class="t" style="left:878px;top:67px">Pause</span>
<span class="t" style="left:878px;top:89px;letter-spacing:-.1px">View Unplaced</span>
<span class="t" style="left:878px;top:112px">More</span>
<span class="t c" style="left:993px;top:99px">Convert To</span>
<span class="t c" style="left:993px;top:112px">Annotation</span>
<span class="t c g" style="left:1065px;top:99px">Download</span>
<span class="t c g" style="left:1065px;top:112px">Map</span>
<span class="t g" style="left:1118px;top:67px">Sync</span>
<span class="t g" style="left:1118px;top:89px">Remove</span>
<span class="t c l" style="left:62px;top:134px">Clipboard</span>
<span class="t c l" style="left:200px;top:134px">Navigate</span>
<span class="t c l" style="left:364px;top:134px">Layer</span>
<span class="t c l" style="left:548px;top:134px">Selection</span>
<span class="t c l" style="left:763px;top:134px">Inquiry</span>
<span class="t c l" style="left:940px;top:134px">Labeling</span>
<span class="t c l" style="left:1100px;top:134px">Offline</span>

<span class="t" style="left:12px;top:165px;font-size:16px;line-height:18px;color:#a8a8a8;letter-spacing:-.2px">Contents</span>
<span class="t" style="left:38px;top:200px;font-style:italic;color:#aaa">Search</span>
<span class="t" style="left:22px;top:281px;font-size:14px;font-weight:bold;color:#c8c8c8;letter-spacing:-.2px">Drawing Order</span>
<span class="t n" style="left:42px;top:308px">Map</span>
<span class="t n" style="left:51px;top:332px;letter-spacing:-.49px">GISWRKS1.WORKS.Drawings_LateralLocationSheets</span>
<span class="t n" style="left:51px;top:380px;letter-spacing:-.52px">SDE_All_with_Brians</span>
<span class="t n" style="left:51px;top:426px;letter-spacing:-.43px">qryNO_CODE_GeocodeAddresses</span>
<span class="t n" style="left:51px;top:472px;letter-spacing:-.07px">GeocodeMinusClarington_AddressLocator</span>
<span class="t n" style="left:51px;top:518px;letter-spacing:-.25px">Drawings_LateralLocationSheets</span>
<span class="t n" style="left:51px;top:567px;letter-spacing:-.59px">SDEDB1.GISADMIN.ADDR_Durham</span>
<span class="t n" style="left:51px;top:613px">Sani</span>
<span class="t n" style="left:62px;top:637px;letter-spacing:-.71px">GISWRKS1.WORKS.SAN_Chamber</span>
<span class="t n" style="left:62px;top:661px;letter-spacing:-.46px">GISWRKS1.WORKS.SAN_InletOutletStructure</span>
<span class="t n" style="left:62px;top:685px;letter-spacing:-.55px">GISWRKS1.WORKS.SAN_PumpingStation</span>
<span class="t n" style="left:62px;top:709px;letter-spacing:-.68px">GISWRKS1.WORKS.SAN_Manhole</span>
<span class="t n" style="left:62px;top:733px;letter-spacing:-.78px">GISWRKS1.WORKS.SAN_SewerService</span>
<span class="t n" style="left:62px;top:757px;letter-spacing:-.71px">GISWRKS1.WORKS.GravitySewer</span>
<span class="t n" style="left:62px;top:781px;letter-spacing:-.66px">GISWRKS1.WORKS.ForceMain</span>
<span class="t n" style="left:62px;top:805px;letter-spacing:-.83px">GISWRKS1.WORKS.San_Features</span>
<span class="t n" style="left:51px;top:829px;letter-spacing:-.15px">Water</span>
<span class="t n" style="left:51px;top:853px;letter-spacing:-.58px">PRCL_Assessment_Parcel</span>
<span class="t n" style="left:51px;top:902px;letter-spacing:-.46px">GISWRKS1.WORKS.LAND_AdministrativeArea</span>
<span class="t n" style="left:51px;top:926px;letter-spacing:-.15px">DurhamStreetUTM</span>
<span class="t n" style="left:32px;top:950px;letter-spacing:-.1px">Standalone Tables</span>
<div class="b" style="left:55px;top:974px;width:300px;height:9px;overflow:hidden"><span class="t n" style="left:0;top:0">All_Addresses.txt</span></div>
<span class="t" style="left:12px;top:986px;color:#2f8fe6;letter-spacing:-.2px">Contents</span>
<span class="t" style="left:72px;top:986px;color:#c8c8c8;letter-spacing:-.2px">Google Street View</span>

<span class="t" style="left:413px;top:161px">Catalog</span>
<span class="t" style="left:505px;top:161px">Map</span>
<span class="t" style="left:397px;top:478px;color:#c8c8c8">1:2,920</span>
<span class="t" style="left:839px;top:477px;color:#b5b5b5;letter-spacing:-.5px">78.8267966°W 43.5071831°N</span>
<span class="t" style="left:1281px;top:477px;color:#c8c8c8;letter-spacing:-.4px">Selected Features: 1</span>
<span class="t" style="left:413px;top:508px;letter-spacing:-.25px">Drawings_LateralLocationSheets</span>
<span class="t" style="left:633px;top:508px;letter-spacing:-.43px">qryNO_CODE_GeocodeAddresses</span>
<span class="t" style="left:860px;top:508px;letter-spacing:-.48px">SDE_All_with_Brians</span>
<span class="t" style="left:1015px;top:508px;letter-spacing:-.52px;color:#dcdcdc">GISWRKS1.WORKS.Drawi...lLocationSheets</span>
<span class="t" style="left:394px;top:535px;font-weight:bold;color:#bbb;letter-spacing:-.2px">Field:</span>
<span class="t" style="left:450px;top:535px;color:#bbb">Add</span>
<span class="t" style="left:501px;top:535px;color:#bbb">Delete</span>
<span class="t" style="left:563px;top:535px;color:#bbb">Calculate</span>
<span class="t" style="left:630px;top:535px;font-weight:bold;color:#bbb;letter-spacing:-.2px">Selection:</span>
<span class="t" style="left:712px;top:535px;color:#bbb;letter-spacing:.4px">Zoom To</span>
<span class="t" style="left:790px;top:535px;color:#bbb">Switch</span>
<span class="t" style="left:854px;top:535px;color:#bbb">Clear</span>
<span class="t" style="left:910px;top:535px;color:#bbb">Delete</span>
<span class="t" style="left:415px;top:559px;color:#bbb;letter-spacing:-1px">OBJECTID</span>
<span class="t" style="left:481px;top:559px;color:#bbb;letter-spacing:-.73px">LATERAL_NUMBER</span>
<span class="t" style="left:609px;top:559px;color:#bbb">LINK</span>
<span class="t" style="left:735px;top:559px;color:#bbb">Shape</span>
<span class="t" style="left:439px;top:982px;letter-spacing:-.2px">1 of *2000 selected</span>
<span class="t c" style="left:578px;top:982px;color:#e2e2e2">Load All</span>
<span class="t" style="left:1075px;top:982px;letter-spacing:-.1px">Filters:</span>
<span class="t" style="left:1339px;top:982px;color:#d8d8d8">100 %</span>

<span class="t" style="left:1432px;top:164px;font-size:16px;line-height:20px;color:#2a8ceb;letter-spacing:-.2px">Configure Layer for Locate</span>
<span class="t" style="left:1503px;top:202px;font-size:15px;line-height:18px;color:#b8b8b8;letter-spacing:-.15px">Fields Options</span>
<span class="t" style="left:1441px;top:224px;color:#bbb;letter-spacing:-.5px">Alias Name</span>
<span class="t" style="left:1541px;top:224px;color:#bbb;letter-spacing:-.4px">Search Mode</span>
<span class="t" style="left:1438px;top:247px;color:#e0ecf8;letter-spacing:-.96px">LATERAL_NUMBER</span>
<span class="t" style="left:1539px;top:247px;color:#e2e2e2">Equals</span>
<span class="t" style="left:1438px;top:272px;color:#d0d0d0;letter-spacing:-.4px">LINK</span>
<span class="t" style="left:1542px;top:285px;color:#c8dff5">Equals</span>
<span class="t" style="left:1438px;top:297px;color:#d0d0d0;letter-spacing:-.5px">STATUS</span>
<span class="t" style="left:1432px;top:986px;color:#2a8ceb;letter-spacing:-.2px">Config...</span>
<span class="t" style="left:1494px;top:986px;color:#c8c8c8;letter-spacing:-.2px">Geopro...</span>
<span class="t" style="left:1556px;top:986px;color:#c8c8c8;letter-spacing:-.2px">Attribut...</span>
<span class="t" style="left:1618px;top:986px;color:#c8c8c8;letter-spacing:-.2px">Create...</span>
</body></html>
